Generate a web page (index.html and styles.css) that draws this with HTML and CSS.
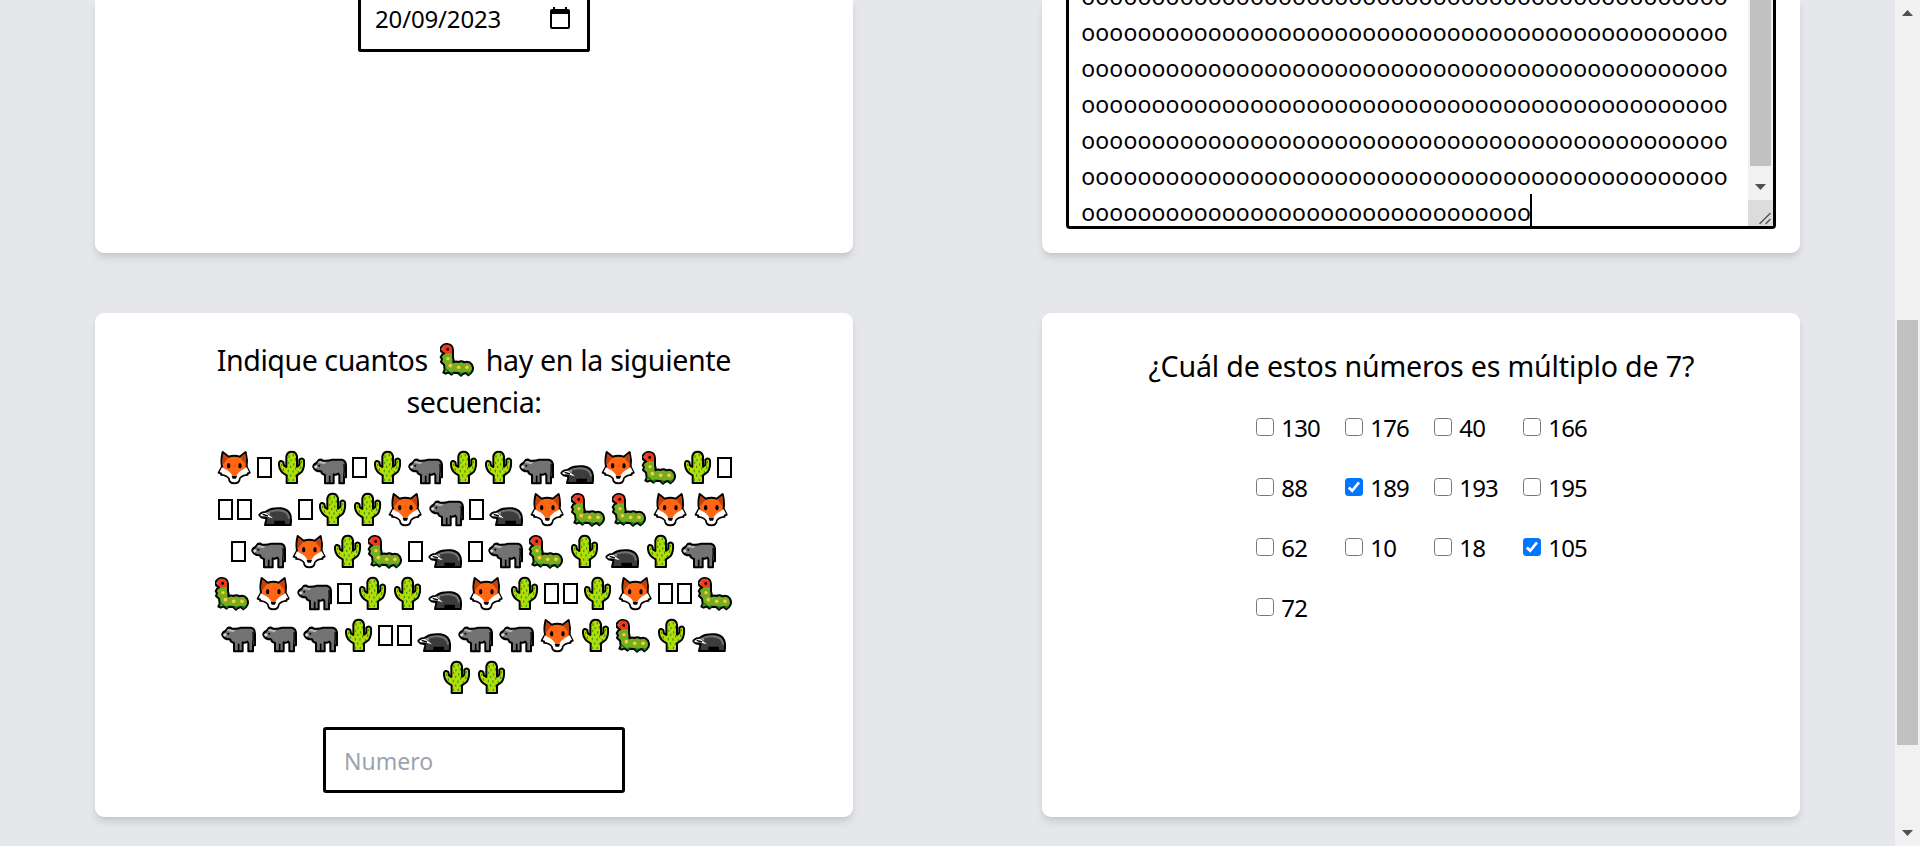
FILE: index.html
```html
<!DOCTYPE html>
<html lang="es">
<head>
<meta charset="utf-8">
<title>Formulario</title>
<link rel="stylesheet" href="styles.css">
</head>
<body>
<svg class="sprites" width="0" height="0" aria-hidden="true">
  <symbol id="fox" viewBox="0 0 123 126">
    <path d="M26 21 44 35Q61 30 77 35L95 21Q101 45 98 65L107 83 100 85 101 89Q83 90 77 100 76 115 61 115 46 115 45 100 39 90 21 89L22 85 14 83 24 65Q20 45 26 21Z" fill="#ff6611" stroke="#000" stroke-width="6" stroke-linejoin="round"/>
    <path d="M28 26 43 38 25 61ZM94 26 79 38 97 61Z" fill="#bd430f"/>
    <path d="M24 67 34 73Q50 80 55 94H67Q73 80 88 73L98 67 105 81 98 83 98 87Q80 89 75 100 74 112 61 112 48 112 47 100 40 89 24 87L24 83 17 81Z" fill="#fff"/>
    <path d="M53 93H69L66 101H56Z"/><ellipse cx="44" cy="62" rx="5" ry="8"/><ellipse cx="78" cy="62" rx="5" ry="8"/>
  </symbol>
  <symbol id="bear" viewBox="0 0 123 126">
    <path d="M13 66Q12 59 22 54L29 45Q36 42 42 47 57 49 70 44H99Q112 47 111 65V97H105V115H91V91L88 86Q80 91 74 88V115H48V90Q38 88 36 79 19 80 13 66Z" fill="#737373" stroke="#000" stroke-width="6" stroke-linejoin="round"/>
    <path d="M26 53Q31 45 39 50L52 52 46 58 33 55Z" fill="#b6b6b6"/><path d="M15 64 22 61 26 67 18 71Z" fill="#ddd"/><circle cx="31" cy="62" r="3"/>
    <path d="M62 113V92" stroke="#000" stroke-width="5"/><path d="M105 57Q107 75 104 95" fill="none" stroke="#000" stroke-width="4"/>
  </symbol>
  <symbol id="badger" viewBox="0 0 123 126">
    <path d="M13 84Q18 76 31 75L39 70Q52 62 79 64 98 66 105 81 110 93 107 114H30L33 101 34 93Q19 94 13 84Z" fill="#3c3c3c" stroke="#000" stroke-width="6" stroke-linejoin="round"/>
    <path d="M46 74Q73 64 93 76 101 82 102 95" fill="none" stroke="#737373" stroke-width="6"/>
    <path d="M15 84Q23 77 33 77L54 94 31 88 19 88Z" fill="#fff"/><path d="M33 77 44 73 46 83Z" fill="#999"/>
    <path d="M23 82 39 87M60 103H88V114H60Z" stroke="#000" stroke-width="4"/>
  </symbol>
  <symbol id="cactus" viewBox="0 0 105 126">
    <path d="M38 114V91Q17 81 15 61V54Q18 44 28 51L30 61 37 66V34Q40 20 53 20 66 20 69 34V65L76 59V44Q83 36 90 45 92 69 83 81L69 91V114Z" fill="#b5dc04" stroke="#000" stroke-width="6" stroke-linejoin="round"/>
    <path d="M45 31V38M58 27V34M64 39V47M51 42V49M44 50V56M59 55V62M50 62V69M65 67V74M43 74V82M57 76V83M50 88V95M64 89V96M43 101V108M58 101V108M23 56V63M28 70V77M82 48V55M80 64V72M73 78V84" stroke="#259f18" stroke-width="3.5"/>
  </symbol>
  <symbol id="bug" viewBox="0 0 123 126">
    <path d="M12 31Q19 20 31 21 47 23 48 39V61Q51 67 49 76 57 72 64 75 74 70 82 76 96 71 105 83 112 97 103 107L94 115 86 108 78 111 72 116 63 108 50 107 44 113 34 106 26 110 19 107 23 98 21 83 12 75 15 66 11 61 16 52 22 49 12 43Z" fill="#73ae20" stroke="#000" stroke-width="6" stroke-linejoin="round"/>
    <path d="M20 25Q33 19 42 28 47 36 45 49H25L20 44 15 41V31Z" fill="#f43718"/>
    <path d="M12 36H20" stroke="#888" stroke-width="4"/><ellipse cx="32" cy="37" rx="4" ry="5"/>
    <path d="M23 101 27 97 35 103M40 105 45 109 50 104M67 105 72 112 76 106M90 105 95 111 100 105" fill="none" stroke="#067a18" stroke-width="4"/>
    <g fill="#ffc83d"><circle cx="33" cy="65" r="5"/><circle cx="40" cy="86" r="5.5"/><circle cx="65" cy="91" r="5.5"/><circle cx="90" cy="91" r="5.5"/></g>
  </symbol>
</svg>
<div class="window">
  <main class="grid">
    <section class="card card-cut date-card">
      <div class="date-field"><span>20/09/2023</span>
        <svg class="calendar" viewBox="0 0 20 22"><path d="M3 0H5V2H15V0H17V2H18Q20 2 20 4V20Q20 22 18 22H2Q0 22 0 20V4Q0 2 2 2H3ZM2 7V20H18V7Z" fill-rule="evenodd"/></svg>
      </div>
    </section>
    <section class="card card-cut text-card">
      <div class="textarea">
        <div class="lines" id="lines"></div>
        <div class="inner-bar">
          <div class="inner-thumb"></div>
          <svg class="inner-arrow" viewBox="0 0 11 6"><path d="M0 0H11L5.5 6Z"/></svg>
          <svg class="resizer" viewBox="0 0 25 25"><path d="M11.5 23.5 22.5 12.5M17.5 23.5 22.5 18.5" stroke="#505050" stroke-width="1.4"/></svg>
        </div>
      </div>
    </section>
    <section class="card count-card">
      <h2 class="title"><span class="t-a">Indique cuantos</span><svg class="emoji title-bug"><use href="#bug"/></svg><span class="t-b">hay en la siguiente</span></h2>
      <h2 class="title"><span class="t-c">secuencia:</span></h2>
      <div class="sequence" id="sequence"></div>
      <div class="number-field">Numero</div>
    </section>
    <section class="card multiple-card">
      <h2 class="title"><span class="t-d">¿Cuál de estos números es múltiplo de 7?</span></h2>
      <div class="options" id="options"></div>
    </section>
  </main>
  <aside class="scrollbar">
    <svg class="arrow" viewBox="0 0 11 6"><path d="M0 6H11L5.5 0Z"/></svg>
    <div class="thumb"></div>
    <svg class="arrow" viewBox="0 0 11 6"><path d="M0 0H11L5.5 6Z"/></svg>
  </aside>
</div>
<script src="app.js"></script>
</body>
</html>
```
FILE: styles.css
```css
* { box-sizing: border-box; }
body { margin: 0; overflow: hidden; background: #e5e7eb; color: #000; font: 24px/36px "Noto Sans", "Open Sans", sans-serif; }
.sprites { position: absolute; }
.window { display: flex; width: 1920px; height: 846px; overflow: hidden; }
.grid { flex: 1; display: grid; grid-template-columns: 758px 758px; grid-template-rows: 253px 504px; column-gap: 189.25px; row-gap: 60px; padding-left: 95px; }
.card { background: #fff; border-radius: 9px; padding: 24px; box-shadow: 0 6px 9px -1.5px rgb(0 0 0 / .1), 0 3px 6px -3px rgb(0 0 0 / .1); }
.card-cut { border-radius: 0 0 9px 9px; padding-top: 0; }

.date-card { display: flex; justify-content: center; align-items: flex-start; }
.date-field { display: flex; justify-content: space-between; width: 232px; height: 52px; border: 3px solid #000; border-top: 0; border-radius: 0 0 3px 3px; padding: 1px 17px 0 14px; letter-spacing: -.15px; }
.calendar { width: 20px; height: 22px; margin-top: 6px; }

.textarea { display: flex; justify-content: space-between; height: 229.3px; border: 3px solid #000; border-top: 0; border-radius: 0 0 4px 4px; overflow: hidden; }
.lines { margin-top: -22px; padding-left: 12px; white-space: nowrap; font-size: 23px; letter-spacing: .14px; }
.line { display: flex; height: 36px; }
.caret { width: 2px; height: 32px; margin-left: -1px; background: #000; }
.inner-bar { width: 25px; background: #f1f1f1; display: flex; flex-direction: column; align-items: center; }
.inner-thumb { width: 21px; height: 167px; background: #c1c1c1; }
.inner-arrow { width: 11px; height: 6px; margin: 18px 0 10px; fill: #505050; }
.resizer { width: 25px; height: 26px; background: #dcdcdc; fill: none; }

.title { display: flex; justify-content: center; height: 42px; margin: 0; font-size: 28.6px; font-weight: 400; line-height: 45px; white-space: pre; }
.t-a { letter-spacing: -.45px; }
.t-b { letter-spacing: -.33px; }
.t-c { letter-spacing: -.5px; }
.t-d { letter-spacing: -.18px; }
.emoji { flex: none; width: 41px; height: 42px; }
.emoji-cactus { width: 35px; }
.tofu { flex: none; width: 15px; height: 21px; margin: 12px 2.3px 0 2px; border: 2px solid #000; }
.title-bug { margin: 0 8px 0 9px; }
.sequence { margin-top: 24px; }
.row { display: flex; justify-content: center; height: 42px; }
.number-field { width: 302px; height: 66px; margin: 30px auto 0; border: 3px solid #000; border-radius: 3px; padding: 0 18px; font-size: 23px; line-height: 62px; color: #9ca3af; }

.multiple-card { padding-top: 30px; }
.options { display: grid; grid-template-columns: repeat(4, 89px); row-gap: 24px; margin: 24px 0 0 190px; }
.option { display: flex; height: 36px; line-height: 38px; letter-spacing: -.8px; }
.box { width: 18px; height: 18px; margin: 9px 7px 0 0; border: 1.5px solid #767676; border-radius: 3.5px; }
.box-on { border: 0; background: #0075ff; }
.box-on path { fill: none; stroke: #fff; stroke-width: 2.7; }

.scrollbar { width: 25px; background: #f1f1f1; display: flex; flex-direction: column; align-items: center; }
.arrow { width: 11px; height: 6px; margin-top: 10px; fill: #505050; }
.thumb { width: 21px; height: 425px; margin: 304px 0 75px; background: #c1c1c1; }
```
FILE: app.js
```js
const lines = document.getElementById('lines');
[46, 46, 46, 46, 46, 46, 32].forEach(n => {
  lines.insertAdjacentHTML('beforeend', `<div class="line"><span>${'o'.repeat(n)}</span>${n < 46 ? '<i class="caret"></i>' : ''}</div>`);
});

const names = { F: 'fox', C: 'cactus', T: 'bear', G: 'badger', L: 'bug' };
document.getElementById('sequence').innerHTML = [
  'F_CT_CTCCTGFLC_',
  '__G_CCFT_GFLLFF',
  '_TFCL_G_TLCGCT',
  'LFT_CCGFC__CF__L',
  'TTTC__GTTFCLCG',
  'CC'
].map(row => '<div class="row">' + [...row].map(k => k === '_'
  ? '<i class="tofu"></i>'
  : `<svg class="emoji emoji-${names[k]}"><use href="#${names[k]}"/></svg>`).join('') + '</div>').join('');

const chosen = [189, 105];
document.getElementById('options').innerHTML = [130, 176, 40, 166, 88, 189, 193, 195, 62, 10, 18, 105, 72]
  .map(n => `<label class="option"><svg class="box ${chosen.includes(n) ? 'box-on' : ''}" viewBox="0 0 18 18">${chosen.includes(n) ? '<path d="M3.8 9.5 7.2 12.8 14 4.3"/>' : ''}</svg><span>${n}</span></label>`).join('');
```
